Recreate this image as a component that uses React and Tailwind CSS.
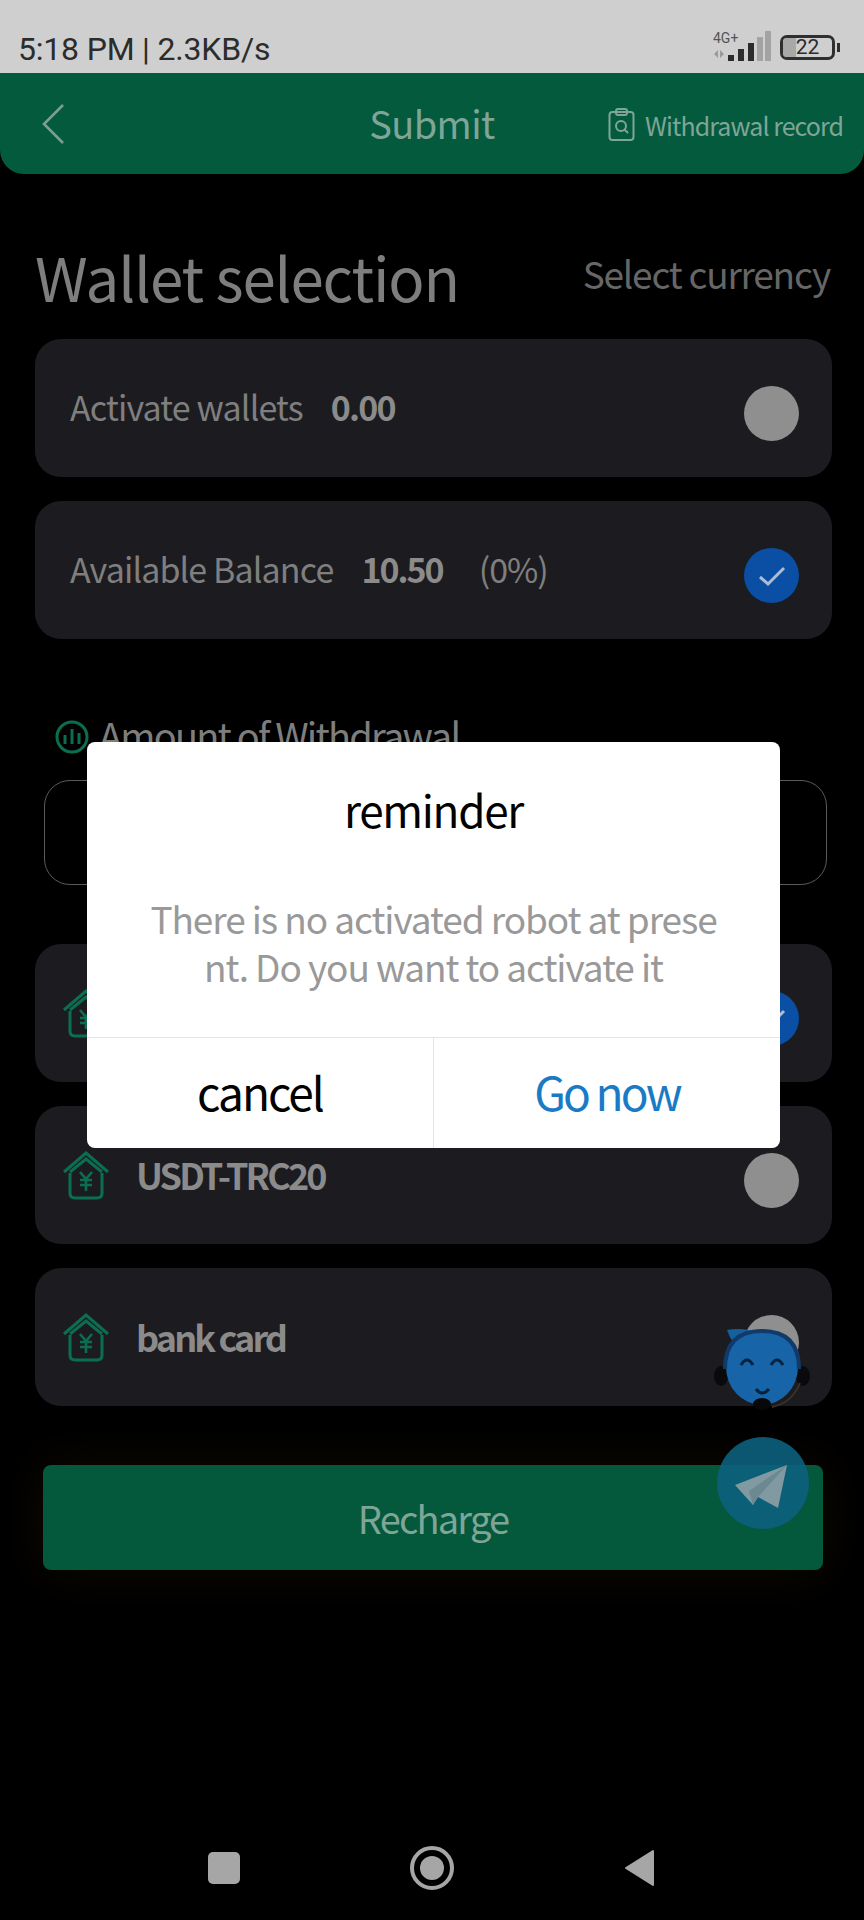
const FONT = "font-['Noto_Sans_CJK_SC',sans-serif]";

function House() {
  return (
    <svg width="48" height="50" viewBox="0 0 48 50" fill="none" stroke="#0b6e50" strokeWidth="3" className="shrink-0">
      <path d="M2 21 L24 2 L46 21" />
      <path d="M8 21 L24 8 L40 21" />
      <path d="M8 22 V42 Q8 47 13 47 H35 Q40 47 40 42 V22" />
      <path d="M18 21 L24 28 L30 21 M24 28 V40 M18 29 H30 M18 34 H30" strokeWidth="2.6" />
    </svg>
  );
}

function Radio({ checked }) {
  if (checked) {
    return (
      <div className="w-[55px] h-[55px] rounded-full bg-[#0a4fa3] flex items-center justify-center">
        <svg width="30" height="24" viewBox="0 0 30 24" fill="none" stroke="#a9bdd6" strokeWidth="3">
          <path d="M3 13 L11 20 L27 4" />
        </svg>
      </div>
    );
  }
  return <div className="w-[55px] h-[55px] rounded-full bg-[#8f8f8f]" />;
}

function Card({ children, checked }) {
  return (
    <div className="h-[138px] rounded-[26px] bg-[#1c1c20] pl-[35px] pr-[33px] flex items-center justify-between">
      <div className="flex items-center -mt-[2px]">{children}</div>
      <div className="mt-[11px]"><Radio checked={checked} /></div>
    </div>
  );
}

function Channel({ name, checked }) {
  return (
    <Card checked={checked}>
      <div className="-ml-[8px] mr-[26px] mt-[4px]"><House /></div>
      <span className="text-[36px] font-bold leading-[50px] tracking-[-2.9px] text-[#8b8b8b]">{name}</span>
    </Card>
  );
}

function Mascot() {
  return (
    <svg width="100" height="110" viewBox="0 0 100 110">
      <path d="M15 23 Q32 20 46 26 L30 42 Q20 38 15 23 Z" fill="#14619f" />
      <ellipse cx="9" cy="69" rx="7" ry="10" fill="#0a0a0c" />
      <ellipse cx="91" cy="69" rx="7" ry="10" fill="#0a0a0c" />
      <ellipse cx="50" cy="60" rx="36" ry="38" fill="#1765a8" />
      <path d="M13 62 Q13 24 50 24 Q87 24 87 62" fill="none" stroke="#113a6a" strokeWidth="4" />
      <path d="M29 58 Q35 48 41 58 M59 58 Q65 48 71 58" fill="none" stroke="#07223f" strokeWidth="3" />
      <path d="M44 82 Q50 90 57 82" fill="none" stroke="#07223f" strokeWidth="3" />
      <ellipse cx="50" cy="97" rx="9" ry="6" fill="#08080a" />
      <path d="M60 100 Q80 96 88 76" fill="none" stroke="#3a3028" strokeWidth="2" />
    </svg>
  );
}

export default function App() {
  return (
    <div className={`relative w-[864px] h-[1920px] overflow-hidden bg-black ${FONT}`}>
      {/* status bar */}
      <div className="h-[73px] bg-[#cfcfcf] flex items-end justify-between pl-[18px] pr-[24px] pb-[6px]">
        <span className="font-['Roboto',sans-serif] text-[32px] leading-[36px] tracking-[-0.2px] text-[#2c2c2c]">5:18 PM | 2.3KB/s</span>
        <div className="flex items-center gap-[9px] mb-[4px]">
          <div className="relative w-[59px] h-[32px]">
            <span className="absolute left-[1px] -top-[1px] font-['Roboto',sans-serif] text-[14px] leading-[16px] text-[#555]">4G+</span>
            <svg className="absolute left-0 top-0" width="59" height="32" viewBox="0 0 59 32">
              <path d="M6 19 L2 23 L6 27 Z M8 19 L12 23 L8 27 Z" fill="#9a9a9a" />
              <rect x="16" y="24" width="6" height="6" fill="#2c2c2c" />
              <rect x="26" y="18" width="6" height="12" fill="#2c2c2c" />
              <rect x="36" y="12" width="6" height="18" fill="#2c2c2c" />
              <rect x="45" y="6" width="6" height="24" fill="#a3a3a3" />
              <rect x="53" y="0" width="6" height="30" fill="#a3a3a3" />
            </svg>
          </div>
          <div className="flex items-center gap-[2px]">
            <div className="relative w-[55px] h-[25px] rounded-[7px] border-[3px] border-[#2f2f2f] flex items-center justify-center overflow-hidden">
              <div className="absolute left-0 top-0 bottom-0 w-[13px] bg-[#a8a8a8]" />
              <span className="relative font-['Roboto',sans-serif] text-[21px] leading-[19px] text-[#2c2c2c]">22</span>
            </div>
            <div className="w-[3px] h-[9px] bg-[#2f2f2f]" />
          </div>
        </div>
      </div>

      {/* header */}
      <div className="relative h-[101px] bg-[#045a3c] rounded-b-[24px] flex items-center justify-between pl-[41px] pr-[21px]">
        <svg width="24" height="42" viewBox="0 0 24 42" fill="none" stroke="#7b9e92" strokeWidth="2.6">
          <path d="M22 2 L3 21 L22 40" />
        </svg>
        <span className="absolute left-0 right-0 -mt-[2px] text-center text-[38px] leading-[50px] tracking-[-0.6px] text-[#7fa598]">Submit</span>
        <div className="relative flex items-center gap-[10px] mt-[2px]">
          <svg width="27" height="34" viewBox="0 0 27 34" fill="none" stroke="#7fa598" strokeWidth="2">
            <rect x="1.5" y="4" width="24" height="28" rx="3" />
            <rect x="8" y="1" width="11" height="6" rx="2" />
            <circle cx="13" cy="18" r="5" />
            <path d="M16 21 L20 25" />
          </svg>
          <span className="text-[25px] leading-[34px] tracking-[-0.95px] text-[#7fa598]">Withdrawal record</span>
        </div>
      </div>

      {/* wallet section */}
      <div className="px-[35px] pt-[60px] flex items-center justify-between h-[165px] pb-[21px]">
        <span className="text-[60px] leading-[72px] tracking-[-1.1px] text-[#7e7e7e]">Wallet selection</span>
        <span className="text-[37px] leading-[50px] tracking-[-1.2px] text-[#666666] mb-[6px] -mr-[1px]">Select currency</span>
      </div>

      <div className="pl-[35px] pr-[32px] flex flex-col gap-[24px]">
        <Card>
          <span className="text-[34px] leading-[50px] tracking-[-0.85px] text-[#7f7f7f]">Activate wallets</span>
          <span className="ml-[28px] text-[34px] font-bold leading-[50px] tracking-[-1.8px] text-[#8b8b8b]">0.00</span>
        </Card>
        <Card checked>
          <span className="text-[34px] leading-[50px] tracking-[-0.87px] text-[#7f7f7f]">Available Balance</span>
          <span className="ml-[28px] text-[34px] font-bold leading-[50px] tracking-[-2px] text-[#8b8b8b]">10.50</span>
          <span className="ml-[36px] text-[34px] leading-[50px] tracking-[-1px] text-[#7f7f7f]">(0%)</span>
        </Card>
      </div>

      {/* amount */}
      <div className="px-[55px] pt-[50px] flex items-center gap-[10px] h-[142px]">
        <svg width="34" height="34" viewBox="0 0 34 34" fill="none" stroke="#0b6e50" strokeWidth="3" className="mt-[4px]">
          <circle cx="17" cy="17" r="15" />
          <path d="M10 24 V15 M17 24 V9 M24 24 V13" />
        </svg>
        <span className="text-[38px] leading-[50px] tracking-[-1.8px] text-[#7e7e7e]">Amount of Withdrawal</span>
      </div>
      <div className="ml-[44px] mr-[37px] -mt-[1px] h-[105px] rounded-[26px] border border-[#5a5a5a]" />

      <div className="pl-[35px] pr-[32px] mt-[59px] flex flex-col gap-[24px]">
        <Channel name="USDT-ERC20" checked />
        <Channel name="USDT-TRC20" />
        <Channel name="bank card" />
      </div>

      {/* recharge */}
      <div className="mx-[43px] mt-[59px] w-[780px] h-[105px] rounded-[8px] bg-[#04593c] shadow-[0_0_50px_rgba(60,40,0,0.3)] flex items-center justify-center">
        <span className="text-[38px] leading-[50px] tracking-[-1.8px] text-[#7fa598]">Recharge</span>
      </div>

      {/* floating buttons */}
      <div className="absolute left-[712px] top-[1307px]"><Mascot /></div>
      <div className="absolute left-[717px] top-[1437px] w-[92px] h-[92px] rounded-full bg-[#0c5f7c]/90 flex items-center justify-center">
        <svg width="56" height="50" viewBox="0 0 56 50">
          <path d="M0 27 L52 7 L43 50 L23 39 L18 47 Z" fill="#8199a0" />
          <path d="M14 33 L52 7 L23 39 L18 47 Z" fill="#6c8890" />
        </svg>
      </div>

      {/* nav bar */}
      <div className="absolute left-0 right-0 bottom-0 h-[100px] flex items-center">
        <div className="absolute left-[208px] top-[32px] w-[32px] h-[32px] rounded-[5px] bg-[#a6a6a6]" />
        <div className="absolute left-[410px] top-[26px] w-[44px] h-[44px] rounded-full border-[4px] border-[#a6a6a6] flex items-center justify-center">
          <div className="w-[24px] h-[24px] rounded-full bg-[#a6a6a6]" />
        </div>
        <svg className="absolute left-[624px] top-[29px]" width="32" height="38" viewBox="0 0 32 38">
          <path d="M29 2 V36 L2 19 Z" fill="#a6a6a6" stroke="#a6a6a6" strokeWidth="2" strokeLinejoin="round" />
        </svg>
      </div>

      {/* dialog */}
      <div className="absolute left-[87px] top-[742px] w-[693px] h-[406px] rounded-[8px] bg-white flex flex-col overflow-hidden">
        <div className="h-[295px] flex flex-col items-center">
          <div className="mt-[42px] text-[44px] leading-[50px] tracking-[-1.3px] text-black">reminder</div>
          <div className="mt-[60px] text-center text-[37px] leading-[48px] tracking-[-1.08px] text-[#999999]">
            There is no activated robot at prese<br />nt. Do you want to activate it
          </div>
        </div>
        <div className="flex-1 flex border-t border-[#e5e5e5] pb-[4px]">
          <div className="flex-1 flex items-center justify-center text-[46px] leading-[50px] tracking-[-2px] text-black">cancel</div>
          <div className="w-px -mb-[4px] bg-[#e5e5e5]" />
          <div className="flex-1 flex items-center justify-center text-[46px] leading-[50px] tracking-[-2.8px] text-[#1a7ac6]">Go now</div>
        </div>
      </div>
    </div>
  );
}
